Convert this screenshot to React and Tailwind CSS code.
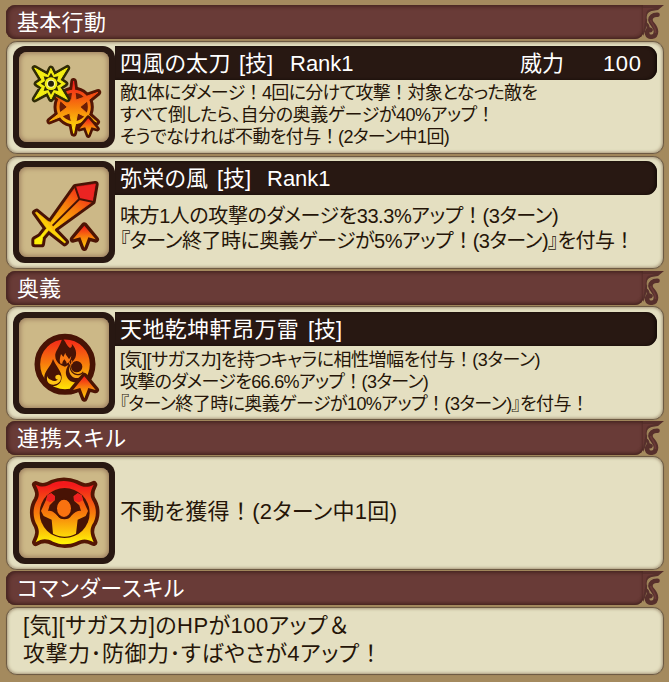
import React from "react";

const JP = "font-['Liberation_Sans','Noto_Sans_CJK_JP',sans-serif] [font-feature-settings:'palt']";

function Ornament() {
  return (
    <svg width="21" height="34" viewBox="0 0 21 34" className="-ml-px shrink-0" fill="none">
      <path d="M0 0H21L15 5C11 5.500 6 6 4.500 9L4 18C3 22 3 25 1 29L0 31Z" fill="#57302c" />
      <path d="M0 3H12L5 5C2 8 3 13 2 18L0 27Z" fill="#663834" />
      <path d="M4.500 14C3.500 9 7 7.200 12 6.800" stroke="#9c8259" strokeWidth="1.300" />
      <path d="M14.500 9.800C10 9.500 7 12 7.500 15.500C8 19 13 21 13 26.500C13 33 5 33 4.200 29C3.800 26 5.500 24 7.500 25" stroke="#57302c" strokeWidth="4.600" strokeLinecap="round" />
      <path d="M7.500 15C8.500 19 13 21.500 12.500 28" stroke="#6b3b37" strokeWidth="1.600" />
      <path d="M2 18C6 20 6 24 3 29" stroke="#57302c" strokeWidth="3" />
    </svg>
  );
}

function Header({ children, className = "", tracking = "" }) {
  return (
    <div className={`flex h-[34px] w-[658px] ${className}`}>
      <div className="flex-1 rounded-l-[9px] rounded-br-[9px] bg-[#693b37] pl-[11px] text-[22px] leading-[35px] text-white shadow-[inset_2px_0_4px_#482622,inset_0_1px_4px_#482622,inset_0_-1px_3px_#482622]">
        <span className={`whitespace-pre ${tracking}`}>{children}</span>
      </div>
      <Ornament />
    </div>
  );
}

function Panel({ children, className = "" }) {
  return (
    <div
      className={`flex w-[658px] overflow-hidden rounded-[11px] border border-[#6d5a43] bg-[#e4dfc1] shadow-[inset_0_0_3px_1px_#a99a7c,0_0_1px_#806b4d] ${className}`}
    >
      {children}
    </div>
  );
}

function IconFrame({ top = 18, children }) {
  return (
    <div className="flex size-[102px] shrink-0 items-center justify-center rounded-[12px] bg-[#281812]">
      <div className="size-[90px] rounded-[8px] bg-[#ccb887] shadow-[inset_0_0_5px_1px_#98785a]">
        <svg viewBox={`27 ${top + 18} 270 270`} className="size-[90px]" strokeLinejoin="round" strokeLinecap="round">
          <defs>
            <linearGradient id="fire" x1="0" y1="0" x2="0" y2="1">
              <stop offset="0" stopColor="#f3191b" />
              <stop offset=".5" stopColor="#f77c0c" />
              <stop offset="1" stopColor="#ffd008" />
            </linearGradient>
            <linearGradient id="fireBlade" gradientUnits="userSpaceOnUse" x1="230" y1="95" x2="120" y2="260">
              <stop offset="0" stopColor="#f0181b" />
              <stop offset=".4" stopColor="#f77c0c" />
              <stop offset="1" stopColor="#fff006" />
            </linearGradient>
            <linearGradient id="fireRound" gradientUnits="userSpaceOnUse" x1="0" y1="90" x2="0" y2="262">
              <stop offset="0" stopColor="#f3191b" />
              <stop offset=".5" stopColor="#f77c0c" />
              <stop offset="1" stopColor="#fff006" />
            </linearGradient>
            <linearGradient id="fireStar" gradientUnits="userSpaceOnUse" x1="0" y1="125" x2="0" y2="275">
              <stop offset="0" stopColor="#f3191b" />
              <stop offset=".5" stopColor="#f77c0c" />
              <stop offset="1" stopColor="#ffe60a" />
            </linearGradient>
          </defs>
          {children}
        </svg>
      </div>
    </div>
  );
}

function UpArrow({ x, y, s = 1 }) {
  const d = "M0 -29L34 12L12 6L0 37L-12 6L-34 12Z";
  return (
    <g transform={`translate(${x} ${y}) scale(${s})`}>
      <path d={d} fill="none" stroke="#4c1404" strokeWidth="20" />
      <path d={d} fill="url(#fire)" />
    </g>
  );
}

function BurstIcon() {
  const small = "M123 86L133 106L172 84L150 120L166 131L150 142L172 178L133 157L123 177L113 157L74 178L96 142L80 131L96 120L74 84L113 106Z";
  const big = "M191 124L198 180L264 157L210 201L260 246L203 219L191 280L179 219L119 243L172 201L132 165L184 180Z";
  return (
    <>
      <circle cx="191" cy="201" r="47" fill="none" stroke="#541604" strokeWidth="27" />
      <path d={big} fill="none" stroke="#541604" strokeWidth="20" />
      <circle cx="191" cy="201" r="47" fill="#6a1d06" stroke="url(#fireStar)" strokeWidth="9" />
      <path d={big} fill="url(#fireStar)" stroke="url(#fireStar)" strokeWidth="3" />
      <UpArrow x={235} y={257} s={0.78} />
      <path d={small} fill="none" stroke="#302b06" strokeWidth="18" />
      <path d={small} fill="#f3ee12" stroke="#f3ee12" strokeWidth="3" />
      <path d="M123 98L131 112L145 109L141 123L154 131L141 139L145 153L131 150L123 164L115 150L101 153L105 139L92 131L105 123L101 109L115 112Z" fill="#302b06" />
      <circle cx="123" cy="131" r="19" fill="#f3ee12" />
      <circle cx="123" cy="131" r="12" fill="#f8f7a4" />
      <circle cx="123" cy="131" r="9" fill="#25200a" />
    </>
  );
}

function SwordIcon() {
  const sword =
    "M256 88L247 140L131 224L167 261L164 264L116 226L98 247L95 267L74 267L74 254L91 244L110 220L76 173L80 171L120 204L196 97Z";
  return (
    <>
      <path d={sword} fill="none" stroke="#481305" strokeWidth="20" />
      <path d={sword} fill="url(#fireBlade)" stroke="url(#fireBlade)" strokeWidth="2" />
      <path d="M256 88L247 140L208 132L196 97Z" fill="#ec2422" />
      <path d="M196 97L208 132L247 140M208 132L128 212" fill="none" stroke="#481305" strokeWidth="6" />
      <path d="M117 202L133 225" stroke="#ffb60c" strokeWidth="6" />
      <UpArrow x={223} y={241} s={1} />
    </>
  );
}

function ElementsIcon() {
  return (
    <>
      <circle cx="165" cy="178" r="83" fill="url(#fireRound)" stroke="#481305" strokeWidth="17" />
      <path d="M157 98C169 112 169 121 180 129C186 127 187 121 185 116C202 133 202 155 190 167C181 179 176 179 165 185C150 180 137 171 136 155C133 139 151 125 157 98Z" fill="#481305" />
      <path d="M152 176C147 168 150 159 153 147L160 156L166 143C167 153 175 155 177 163L184 153C182 166 178 172 170 176C170 169 166 168 163 163C160 168 157 170 157 176Z" fill="#f97813" />
      <path d="M129 162C136 181 156 200 155 218C154 234 143 244 127 243C109 241 101 229 103 214C106 195 123 184 129 162Z" fill="#481305" />
      <path d="M112 213C107 229 117 240 131 239C147 238 156 225 152 213C147 207 138 209 136 215C135 222 142 225 144 222C140 229 130 230 124 225C115 222 113 218 112 213Z" fill="#ffc516" />
      <circle cx="200" cy="185" r="17" fill="#481305" />
      <path d="M182 172C172 182 166 196 168 208C171 226 189 237 207 231C219 225 224 211 219 199C215 205 209 208 202 207C187 205 178 191 182 172Z" fill="#481305" />
      <path d="M179 183C178 198 189 210 203 211C210 211 215 208 218 204C217 217 204 222 193 218C180 213 174 198 179 183Z" fill="#f8a415" />
      <path d="M175 167L180 178M185 167L186 176" stroke="#f97813" strokeWidth="3" />
      <UpArrow x={223} y={243} s={1} />
    </>
  );
}

function MuscleIcon() {
  const badge =
    "M77 89C98 100 113 93 127 85C150 76 175 76 199 86C217 96 230 100 251 89C241 108 239 121 246 134C261 156 262 187 246 210C238 228 242 242 251 262C229 250 216 252 198 261C176 270 151 270 129 260C112 251 96 250 77 262C88 240 89 228 82 212C68 190 66 158 82 134C90 118 86 107 77 89Z";
  return (
    <>
      <path d={badge} fill="none" stroke="#541604" strokeWidth="22" />
      <path d={badge} fill="url(#fireRound)" />
      <circle cx="164" cy="174" r="75" fill="#481305" />
      <path d="M113 120L124 115L135 124L134 136L119 151L114 168C126 164 134 175 143 182C150 196 177 196 184 182C194 173 202 165 213 168L208 151L192 137L191 124L203 115L215 121L219 135L234 168L227 183L203 194L198 236C177 248 151 248 129 236L125 194L101 183L93 168L108 135Z" fill="url(#fireRound)" />
      <path d="M113 120L124 115L135 124L134 136L120 142L108 135ZM215 121L203 115L191 124L192 137L207 142L219 135Z" fill="#ee2020" />
      <ellipse cx="162" cy="160" rx="24" ry="29" fill="#f97210" stroke="#481305" strokeWidth="6" />
    </>
  );
}

function TitleBar({ children }) {
  return (
    <div className="flex h-[34px] w-[542px] rounded-r-[11px] bg-[#281812] pl-[5px] text-[22px] leading-[35px] text-white shadow-[inset_-2px_0_3px_#150c08]">
      {children}
    </div>
  );
}

/* Full-width marks keep their whole em box; everything else is set proportionally. */
function Line({ children, className = "" }) {
  return (
    <div className={`whitespace-pre ${className}`}>
      {String(children)
        .split(/([！＆])/)
        .map((part, i) =>
          i % 2 ? (
            <span key={i} className="[font-feature-settings:normal]">{part}</span>
          ) : (
            part
          ),
        )}
    </div>
  );
}

export default function App() {
  return (
    <div lang="ja" className={`flex h-[682px] w-[669px] flex-col overflow-hidden bg-[#a48a5e] pt-[5px] pl-[6px] text-[#251508] ${JP}`}>
      <Header tracking="tracking-[0.3px]">基本行動</Header>
      <Panel className="mt-[2px] h-[113px] pt-1 pl-1.5">
        <IconFrame><BurstIcon /></IconFrame>
        <div>
          <TitleBar>
            <div className="flex w-[400px]">
              <Line className="w-[119px] tracking-[0.3px]">四風の太刀</Line>
              <Line className="w-[51px]">[技]</Line>
              <Line>Rank1</Line>
            </div>
            <span className="w-[83px]">威力</span>
            <span className="tracking-[0.6px]">100</span>
          </TitleBar>
          <div className="pt-[2px] pl-[5px] text-[18px] leading-[22px]">
            <Line className="tracking-[-0.67px]">敵1体にダメージ！4回に分けて攻撃！対象となった敵を</Line>
            <Line className="tracking-[-0.45px]">すべて倒したら、自分の奥義ゲージが40%アップ！</Line>
            <Line className="tracking-[-0.6px]">そうでなければ不動を付与！(2ターン中1回)</Line>
          </div>
        </div>
      </Panel>
      <Panel className="mt-[2px] h-[113px] pt-1 pl-1.5">
        <IconFrame><SwordIcon /></IconFrame>
        <div>
          <TitleBar>
            <Line className="w-[97px] tracking-[0.3px]">弥栄の風</Line>
            <Line className="w-[50px]">[技]</Line>
            <Line>Rank1</Line>
          </TitleBar>
          <div className="pt-[9px] pl-[5px] text-[20px] leading-[25px]">
            <Line className="tracking-[-0.42px]">味方1人の攻撃のダメージを33.3%アップ！(3ターン)</Line>
            <Line className="tracking-[-0.5px]">『ターン終了時に奥義ゲージが5%アップ！(3ターン)』を付与！</Line>
          </div>
        </div>
      </Panel>
      <Header className="mt-[2px]">奥義</Header>
      <Panel className="mt-px h-[114px] pt-[5px] pl-1.5">
        <IconFrame top={21}><ElementsIcon /></IconFrame>
        <div>
          <TitleBar>
            <Line className="w-[188px] tracking-[0.4px]">天地乾坤軒昂万雷</Line>
            <Line>[技]</Line>
          </TitleBar>
          <div className="pt-[3px] pl-[5px] text-[18px] leading-[22px]">
            <Line className="tracking-[-0.47px]">[気][サガスカ]を持つキャラに相性増幅を付与！(3ターン)</Line>
            <Line className="tracking-[-0.68px]">攻撃のダメージを66.6%アップ！(3ターン)</Line>
            <Line className="tracking-[-0.57px]">『ターン終了時に奥義ゲージが10%アップ！(3ターン)』を付与！</Line>
          </div>
        </div>
      </Panel>
      <Header className="mt-px" tracking="tracking-[1px]">連携スキル</Header>
      <Panel className="mt-px h-[114px] pt-[5px] pl-1.5">
        <IconFrame top={21}><MuscleIcon /></IconFrame>
        <div className="pt-[36px] pl-[5px] text-[22px] leading-[28px]">
          <Line className="tracking-[0.3px]">不動を獲得！(2ターン中1回)</Line>
        </div>
      </Panel>
      <Header className="mt-px" tracking="tracking-[0.8px]">コマンダースキル</Header>
      <Panel className="mt-[2px] h-[68px] pt-[4px] pl-[16px]">
        <div className="text-[22px] leading-[28px]">
          <Line className="tracking-[0.45px]">[気][サガスカ]のHPが100アップ＆</Line>
          <Line className="tracking-[0.5px]">攻撃力･防御力･すばやさが4アップ！</Line>
        </div>
      </Panel>
    </div>
  );
}
